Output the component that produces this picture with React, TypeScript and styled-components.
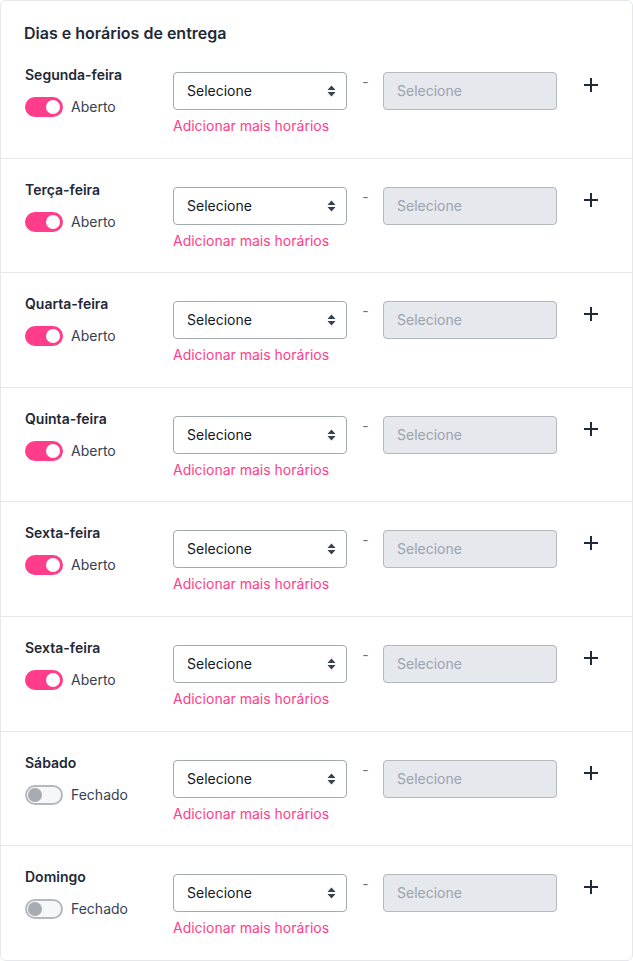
import React, { useState } from 'react'
import styled, { createGlobalStyle } from 'styled-components'

const GlobalStyle = createGlobalStyle`
  * { box-sizing: border-box; }
  body {
    margin: 0;
    background: #ffffff;
    font-family: Inter, "Noto Sans", sans-serif;
    -webkit-font-smoothing: antialiased;
  }
`

const pink = '#ff3d8a'

const Card = styled.div`
  width: 633px;
  min-height: 961px;
  border: 1px solid #e5e7eb;
  border-radius: 6px;
  background: #fff;
`

const Header = styled.div`
  padding: 22px 24px 1px 23px;
`

const Title = styled.h2`
  margin: 0;
  font-size: 16px;
  line-height: 20px;
  font-weight: 600;
  color: #1f2937;
`

const Row = styled.div`
  display: grid;
  grid-template-columns: 148px 174px 36px 174px 1fr;
  padding: 21px 0 21.6px 24px;
  border-top: 1px solid #e5e7eb;

  &:first-of-type {
    border-top: none;
  }
`

const DayColumn = styled.div`
  display: flex;
  flex-direction: column;
`

const DayName = styled.div`
  font-size: 14px;
  line-height: 20px;
  font-weight: 600;
  color: #1f2937;
`

const ToggleLine = styled.label`
  display: flex;
  align-items: center;
  gap: 8px;
  margin-top: 12px;
  cursor: pointer;
  font-size: 14px;
  line-height: 20px;
  color: #374151;
`

const Track = styled.span<{ $on: boolean }>`
  position: relative;
  width: 38px;
  height: 20px;
  border-radius: 10px;
  background: ${(p) => (p.$on ? pink : '#f6f7f8')};
  border: 2px solid ${(p) => (p.$on ? pink : '#b4b8bf')};
  flex-shrink: 0;
`

const Knob = styled.span<{ $on: boolean }>`
  position: absolute;
  top: 1px;
  left: ${(p) => (p.$on ? '19px' : '1px')};
  width: 14px;
  height: 14px;
  border-radius: 50%;
  background: ${(p) => (p.$on ? '#ffffff' : '#a7abb2')};
`

const SelectColumn = styled.div`
  display: flex;
  flex-direction: column;
  margin-top: 7px;
`

const SelectBox = styled.div<{ $disabled?: boolean }>`
  position: relative;
  height: 38px;
  border: 1px solid ${(p) => (p.$disabled ? '#b3b7be' : '#a3a7ae')};
  border-radius: 4px;
  background: ${(p) => (p.$disabled ? '#e5e8ec' : '#ffffff')};
  display: flex;
  align-items: center;
  padding-left: 13px;
  padding-bottom: 1px;
  font-size: 14px;
  color: ${(p) => (p.$disabled ? '#9ca3af' : '#111827')};
`

const Arrows = styled.svg`
  position: absolute;
  right: 10px;
  top: 50%;
  transform: translateY(-50%);
`

const AddLink = styled.a`
  margin-top: 6px;
  font-size: 14px;
  line-height: 20px;
  color: ${pink};
  text-decoration: none;
  cursor: pointer;
`

const Dash = styled.div`
  margin-top: 7px;
  text-align: center;
  font-size: 14px;
  line-height: 20px;
  color: #6b7280;
  padding-left: 1px;
`

const PlusButton = styled.button`
  margin: 13px 0 0 27px;
  width: 14px;
  height: 14px;
  padding: 0;
  border: none;
  background: none;
  cursor: pointer;
  display: flex;
`

type Day = { name: string; open: boolean }

const initialDays: Day[] = [
  { name: 'Segunda-feira', open: true },
  { name: 'Terça-feira', open: true },
  { name: 'Quarta-feira', open: true },
  { name: 'Quinta-feira', open: true },
  { name: 'Sexta-feira', open: true },
  { name: 'Sexta-feira', open: true },
  { name: 'Sábado', open: false },
  { name: 'Domingo', open: false },
]

const UpDown = () => (
  <Arrows width="9" height="12" viewBox="0 0 9 12">
    <path d="M4.5 0.5 L8.5 5 H0.5 Z" fill="#374151" />
    <path d="M4.5 11.5 L8.5 7 H0.5 Z" fill="#374151" />
  </Arrows>
)

const DayRow = ({ day, onToggle }: { day: Day; onToggle: () => void }) => (
  <Row>
    <DayColumn>
      <DayName>{day.name}</DayName>
      <ToggleLine onClick={onToggle}>
        <Track $on={day.open}>
          <Knob $on={day.open} />
        </Track>
        {day.open ? 'Aberto' : 'Fechado'}
      </ToggleLine>
    </DayColumn>
    <SelectColumn>
      <SelectBox>
        Selecione
        <UpDown />
      </SelectBox>
      <AddLink>Adicionar mais horários</AddLink>
    </SelectColumn>
    <Dash>-</Dash>
    <SelectColumn>
      <SelectBox $disabled>Selecione</SelectBox>
    </SelectColumn>
    <div>
      <PlusButton aria-label="Adicionar">
        <svg width="14" height="14" viewBox="0 0 14 14">
          <path d="M7 0 V14 M0 7 H14" stroke="#1f2937" strokeWidth="2" />
        </svg>
      </PlusButton>
    </div>
  </Row>
)

export default function App() {
  const [days, setDays] = useState(initialDays)

  const toggle = (i: number) =>
    setDays((d) => d.map((x, j) => (j === i ? { ...x, open: !x.open } : x)))

  return (
    <>
      <GlobalStyle />
      <Card>
        <Header>
          <Title>Dias e horários de entrega</Title>
        </Header>
        <div>
          {days.map((day, i) => (
            <DayRow key={i} day={day} onToggle={() => toggle(i)} />
          ))}
        </div>
      </Card>
    </>
  )
}
